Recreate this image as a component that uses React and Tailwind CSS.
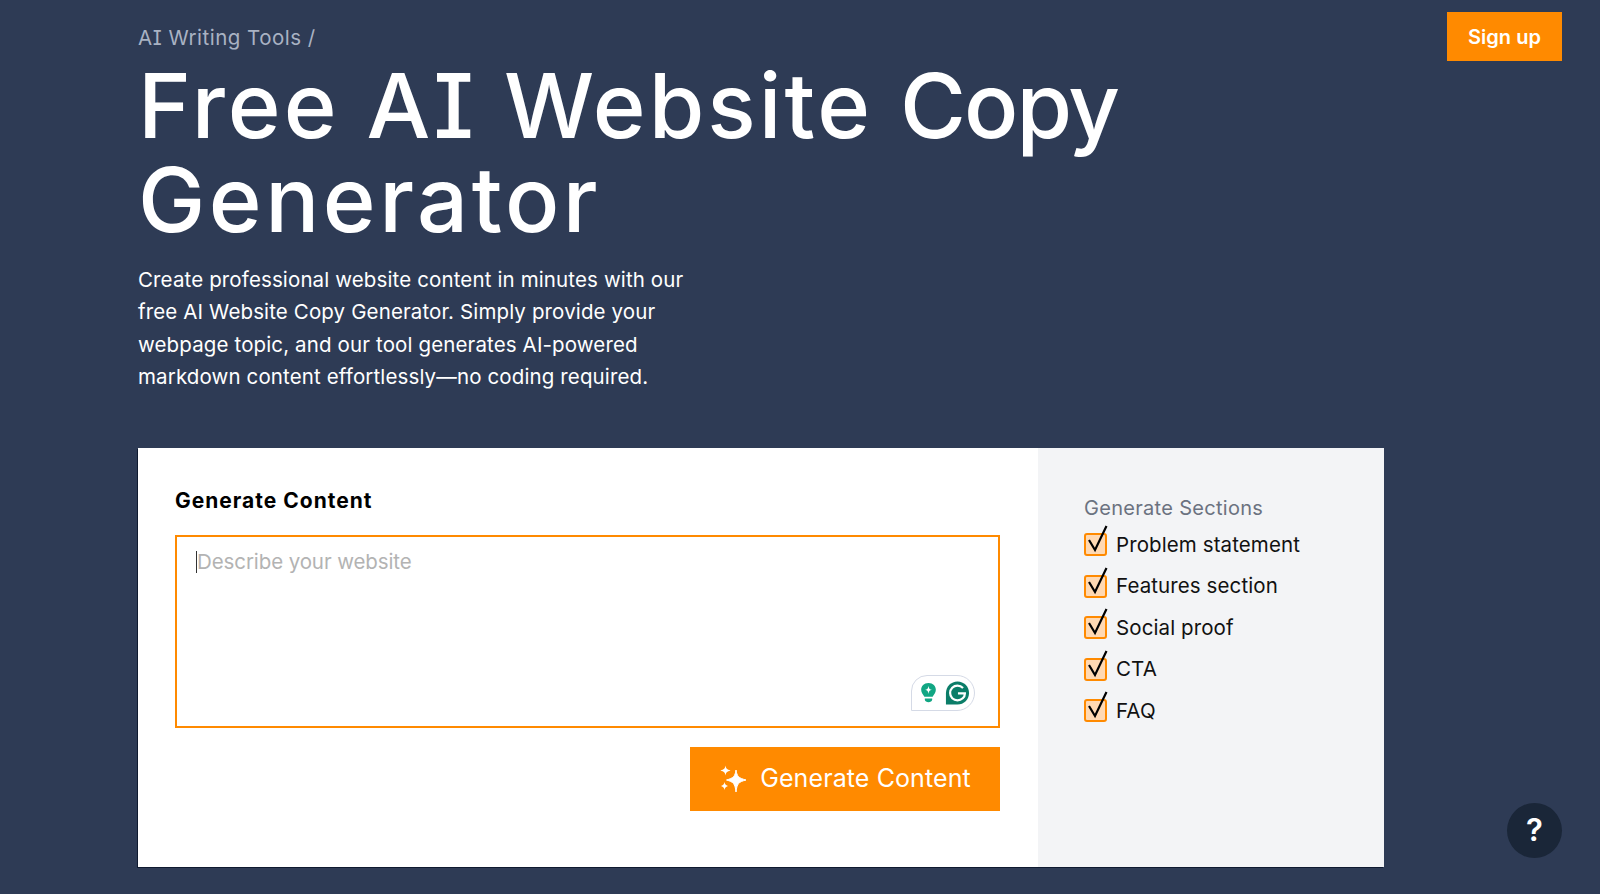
import React from 'react';

const sections = ['Problem statement', 'Features section', 'Social proof', 'CTA', 'FAQ'];

function CheckRow({ label }) {
  return (
    <div className="flex h-[41.5px] items-center gap-[9px]">
      <span className="relative h-[23px] w-[23px] shrink-0 rounded-[3px] border-2 border-[#ff8a00] bg-[#ffd9b3]">
        <svg className="absolute left-[1px] top-[-10px]" width="22" height="30" viewBox="0 0 22 30" fill="none">
          <path d="M2 15 L8 25 L19.500 1" stroke="#000" strokeWidth="2.200" />
        </svg>
      </span>
      <span className="text-[20.500px] tracking-[0.1px] text-[#111]">{label}</span>
    </div>
  );
}

function Sparkles() {
  return (
    <svg width="28" height="28" viewBox="0 0 28 28" fill="#fff">
      <path d="M17 5 C18 11.500 19.500 13 27 15 C19.500 17 18 18.500 17 27 C16 18.500 14.500 17 7.500 15 C14.500 13 16 11.500 17 5Z" stroke="#fff" strokeWidth="1" />
      <path d="M6.500 0.500 C7 3.500 8 4.500 11.500 5.500 C8 6.500 7 7.500 6.500 10.500 C6 7.500 5 6.500 1.500 5.500 C5 4.500 6 3.500 6.500 0.500Z" />
      <path d="M5.500 17 C6 19.500 6.500 20 9 21 C6.500 22 6 22.500 5.500 25 C5 22.500 4.500 22 2 21 C4.500 20 5 19.500 5.500 17Z" />
    </svg>
  );
}

function GrammarlyBadge() {
  return (
    <div className="absolute bottom-[15px] right-[23px] flex h-[36px] w-[64px] items-center gap-[8px] rounded-tl-[16px] rounded-r-[18px] rounded-bl-none border border-[#d5dae6] bg-white pl-[8px]">
      <svg width="17" height="22" viewBox="0 0 18 24">
        <path d="M9 1 C14 1 17 4.500 17 8.500 C17 12 15 13.500 13.500 16 L4.500 16 C3 13.500 1 12 1 8.500 C1 4.500 4 1 9 1Z" fill="#11a683" />
        <path d="M5 18 H13 V19 C13 21 11 22 9 22 C7 22 5 21 5 19Z" fill="#11a683" />
        <path d="M9 4 C9.500 7 10 8 13 8.500 C10 9 9.500 10 9 13 C8.500 10 8 9 5 8.500 C8 8 8.500 7 9 4Z" fill="#fff" />
      </svg>
      <svg width="25" height="24" viewBox="0 0 26 26">
        <path d="M13 0.500 C20 0.500 25.500 6 25.500 13 C25.500 20 20 25.500 13 25.500 L0.500 25.500 L0.500 13 C0.500 6 6 0.500 13 0.500Z" fill="#0b7d68" />
        <path d="M19 7.500 C17.500 6 15.500 5 13 5 C8.500 5 5 8.500 5 13 C5 17.500 8.500 21 13 21 C17.500 21 21 17.500 21 13.500 L13.500 13.500" fill="none" stroke="#fff" strokeWidth="2.400" />
      </svg>
    </div>
  );
}

export default function App() {
  return (
    <div className="relative h-[894px] overflow-hidden bg-[#2e3b55] pl-[138px] font-['Inter',sans-serif]">
      <a className="absolute right-[38px] top-[12px] flex h-[49px] w-[115px] items-center justify-center bg-[#ff8a00] text-[20px] font-semibold text-white">
        Sign up
      </a>

      <header className="pt-[23px]">
        <div className="text-[20.500px] leading-[30px] tracking-[0.5px] text-[#a9b2c3] [font-feature-settings:'cv08']">AI Writing Tools /</div>
        <h1 className="mt-[6px] w-[1100px] text-[90px] font-medium leading-[94px] tracking-[3px] text-white [font-feature-settings:'cv08']">
          Free AI Website <span className="inline-block tracking-[-2px]">Copy</span> <span className="inline-block tracking-[3.500px]">Generator</span>
        </h1>
        <p className="mt-[17px] w-[580px] text-[20.500px] leading-[32.300px] tracking-[0.13px] text-white">
          Create professional website content in minutes with our free AI Website Copy Generator. Simply provide your webpage topic, and our tool generates AI-powered markdown content effortlessly—no coding required.
        </p>
      </header>

      <section className="mt-[55px] flex h-[419px] w-[1246px] bg-white shadow-[-1px_1px_0_#0f1a30]">
        <div className="w-[900px] pl-[37px] pr-[38px] pt-[39px]">
          <h2 className="text-[21px] font-bold leading-[28px] tracking-[1px] text-black">Generate Content</h2>
          <div className="relative mt-[20px] h-[193px] w-[825px] border-2 border-[#ff8a00] pl-[19px] pt-[12px]">
            <div className="flex h-[26px] items-center text-[20.500px] tracking-[-0.1px] text-[#b3b3b3]">
              <span className="h-[22px] w-px bg-[#333]" />
              Describe your website
            </div>
            <GrammarlyBadge />
          </div>
          <div className="mt-[19px] flex justify-end">
            <button className="flex h-[64px] w-[310px] items-center justify-center gap-[13px] bg-[#ff8a00] text-[25px] tracking-[0.1px] text-white">
              <Sparkles />
              Generate Content
            </button>
          </div>
        </div>
        <aside className="flex-1 bg-[#f3f4f6] pl-[46px] pt-[46px]">
          <div className="mb-[2px] text-[20px] leading-[28px] tracking-[0.3px] text-[#6b7280]">Generate Sections</div>
          {sections.map((s) => (
            <CheckRow key={s} label={s} />
          ))}
        </aside>
      </section>

      <button className="absolute bottom-[36px] right-[38px] flex h-[55px] w-[55px] items-center justify-center rounded-full bg-[#1a2638] text-[31px] font-semibold text-white">
        ?
      </button>
    </div>
  );
}
